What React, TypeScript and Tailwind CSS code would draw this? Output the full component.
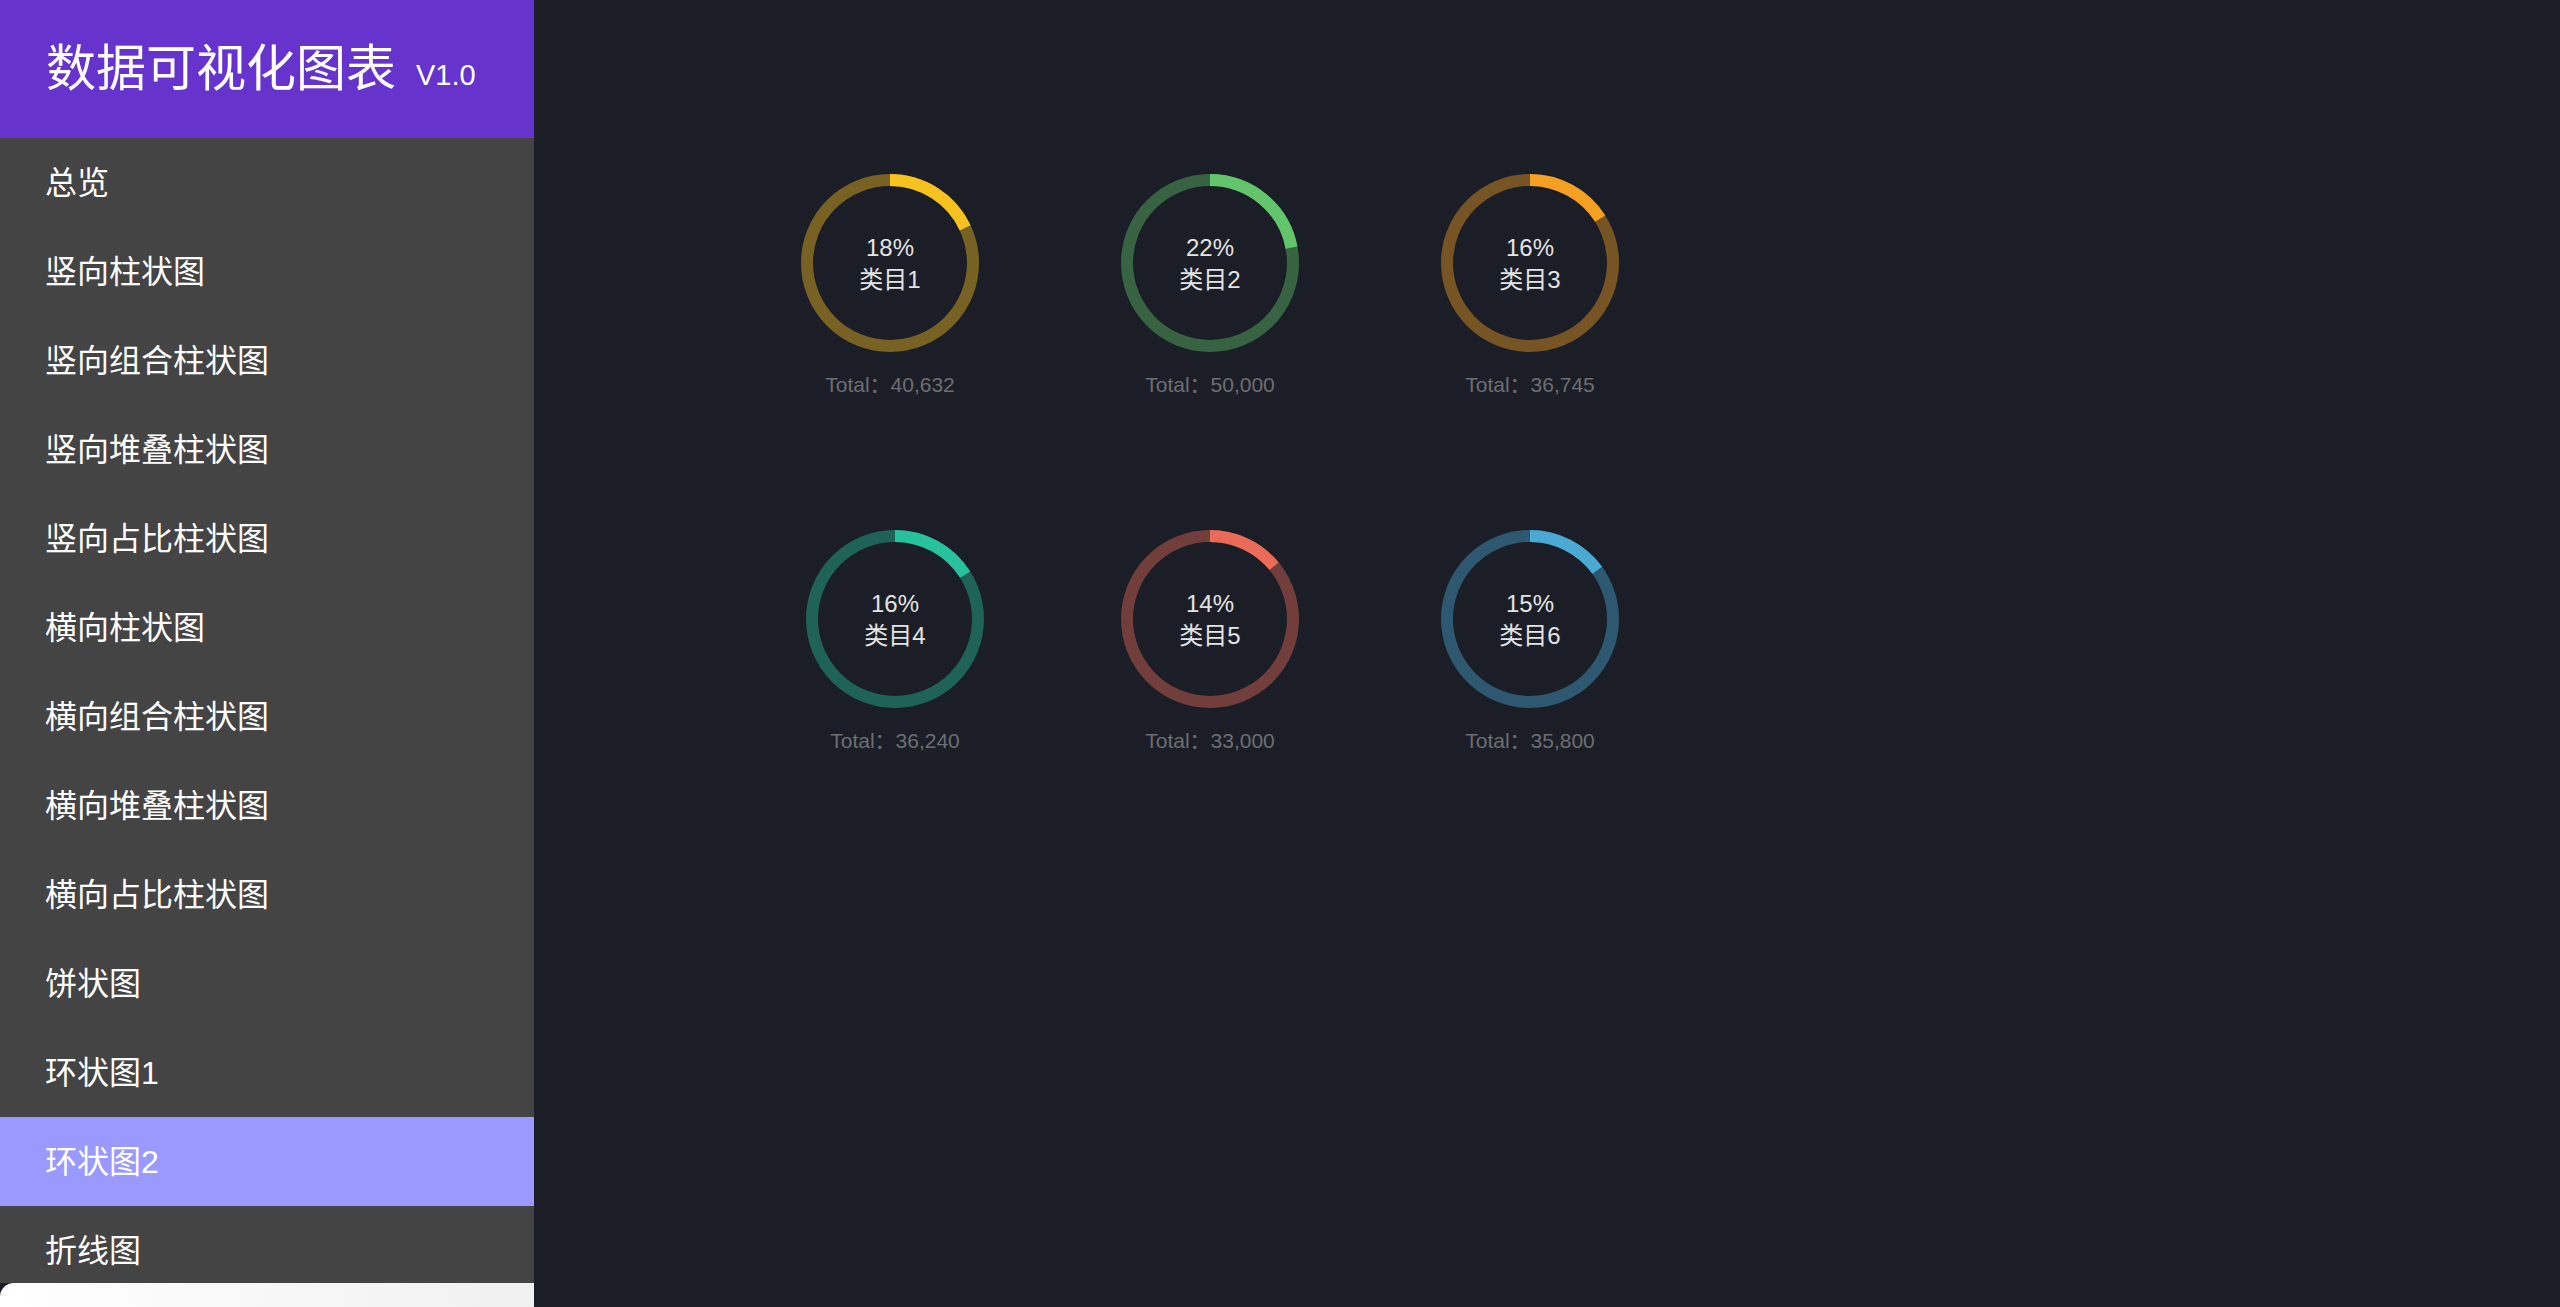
const menu = [
  "总览",
  "竖向柱状图",
  "竖向组合柱状图",
  "竖向堆叠柱状图",
  "竖向占比柱状图",
  "横向柱状图",
  "横向组合柱状图",
  "横向堆叠柱状图",
  "横向占比柱状图",
  "饼状图",
  "环状图1",
  "环状图2",
  "折线图",
];

const active = "环状图2";

const rings = [
  { pct: 18, name: "类目1", total: "40,632", color: "#f7c21f" },
  { pct: 22, name: "类目2", total: "50,000", color: "#62c46b" },
  { pct: 16, name: "类目3", total: "36,745", color: "#f5a022" },
  { pct: 16, name: "类目4", total: "36,240", color: "#27c19d", nudge: true },
  { pct: 14, name: "类目5", total: "33,000", color: "#ea6b58" },
  { pct: 15, name: "类目6", total: "35,800", color: "#4aaad4" },
];

const font = { fontFamily: '"Liberation Sans", "Noto Sans CJK SC", sans-serif' };

const Donut = ({ pct, color }: { pct: number; color: string }) => {
  const r = 83;
  const c = 2 * Math.PI * r;
  return (
    <svg width="178" height="178" viewBox="0 0 178 178" className="block">
      <circle cx="89" cy="89" r={r} fill="none" stroke={color} strokeOpacity="0.42" strokeWidth="12" />
      <circle
        cx="89"
        cy="89"
        r={r}
        fill="none"
        stroke={color}
        strokeWidth="12"
        strokeDasharray={`${(c * pct) / 100} ${c}`}
        transform="rotate(-90 89 89)"
      />
    </svg>
  );
};

const Sidebar = () => (
  <aside className="w-[534px] h-[1307px] shrink-0 flex flex-col bg-[#444444]">
    <div className="h-[138px] shrink-0 bg-[#6633cc] flex items-center pl-[46px] text-white">
      <span className="text-[50px] leading-none">数据可视化图表</span>
      <span className="text-[29px] leading-none ml-[20px] mt-[12px]">V1.0</span>
    </div>
    <nav className="flex-1 overflow-hidden">
      {menu.map((m) => (
        <div
          key={m}
          className={`h-[89px] flex items-center pl-[45px] text-[32px] text-white ${
            m === active ? "bg-[#9999ff]" : ""
          }`}
        >
          {m}
        </div>
      ))}
    </nav>
    <div className="h-[24px] shrink-0 bg-[#1b1e26]">
      <div className="h-full rounded-tl-[14px] bg-gradient-to-r from-[#ffffff] to-[#f0f0f0]" />
    </div>
  </aside>
);

export default function App() {
  return (
    <div className="flex w-[2560px] h-[1307px] overflow-hidden bg-[#1b1e26]" style={font}>
      <Sidebar />
      <main className="flex-1 pl-[196px] pt-[174px]">
        <div className="grid grid-cols-[320px_320px_320px] gap-y-[132px]">
          {rings.map((r) => (
            <div key={r.name} className={`flex flex-col items-center ${r.nudge ? "pl-[10px]" : ""}`}>
              <div className="relative">
                <Donut pct={r.pct} color={r.color} />
                <div className="absolute inset-0 flex flex-col items-center justify-center text-[24px] leading-[32px] text-[#e4e4e4] pt-[2px]">
                  <span>{r.pct}%</span>
                  <span>{r.name}</span>
                </div>
              </div>
              <div className="mt-[20px] h-[26px] text-[21px] leading-[26px] text-[#6c6e72] whitespace-nowrap">
                Total：{r.total}
              </div>
            </div>
          ))}
        </div>
      </main>
    </div>
  );
}
